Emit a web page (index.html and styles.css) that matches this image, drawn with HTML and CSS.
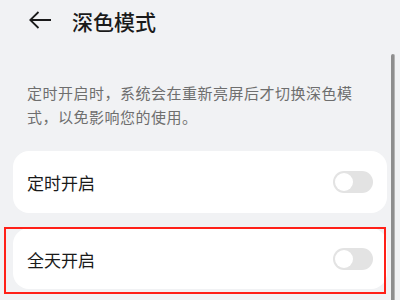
FILE: index.html
```html
<!DOCTYPE html>
<html lang="zh">
<head>
<meta charset="utf-8">
<link rel="stylesheet" href="styles.css">
</head>
<body>
<div class="page">
  <header class="header">
    <svg class="back" width="22" height="18" viewBox="0 0 22 18">
      <path d="M1 9H22M9.5 1L1.2 9L9.5 17" fill="none" stroke="#1a1a1a" stroke-width="1.8" stroke-linecap="butt"/>
    </svg>
    <h1 class="title">深色模式</h1>
  </header>
  <p class="desc">定时开启时，系统会在重新亮屏后才切换深色模式，以免影响您的使用。</p>
  <div class="card">
    <span class="label">定时开启</span>
    <span class="toggle"><span class="knob"></span></span>
  </div>
  <div class="card highlighted">
    <span class="label">全天开启</span>
    <span class="toggle"><span class="knob"></span></span>
  </div>
  <div class="scrollbar"></div>
</div>
</body>
</html>
```
FILE: styles.css
```css
html, body {
  margin: 0;
  padding: 0;
  background: #f1f2f4;
  font-family: "Noto Sans CJK SC", "Noto Sans", sans-serif;
}
.page {
  position: relative;
  width: 400px;
  height: 300px;
  overflow: hidden;
}
.header {
  display: flex;
  align-items: center;
  height: 42px;
  padding-left: 29px;
  gap: 21px;
}
.back {
  display: block;
  margin-top: -2px;
}
.title {
  margin: 0;
  font-size: 21px;
  font-weight: 500;
  color: #1a1a1a;
  line-height: 28px;
}
.desc {
  margin: 39px 0 0 27px;
  width: 335px;
  font-size: 15px;
  line-height: 24px;
  letter-spacing: 0.5px;
  color: #6e6e6e;
}
.card {
  position: relative;
  display: flex;
  align-items: center;
  justify-content: space-between;
  box-sizing: border-box;
  width: 374px;
  height: 62px;
  margin: 22px 0 0 13px;
  padding: 0 14px;
  background: #ffffff;
  border-radius: 16px;
}
.card + .card {
  margin-top: 15px;
  height: 61px;
}
.label {
  font-size: 17px;
  color: #1a1a1a;
  line-height: 24px;
  margin-top: 2px;
}
.toggle {
  position: relative;
  width: 40px;
  height: 22px;
  border-radius: 11px;
  background: #e3e3e3;
}
.knob {
  position: absolute;
  left: 2px;
  top: 2px;
  width: 18px;
  height: 18px;
  border-radius: 50%;
  background: #ffffff;
}
.highlighted::after {
  content: "";
  position: absolute;
  left: -9px;
  top: -1px;
  right: 1px;
  bottom: -5px;
  border: 2px solid #ff2018;
}
.scrollbar {
  position: absolute;
  left: 391px;
  top: 54px;
  width: 3px;
  bottom: 0;
  background: #8e8e8e;
  border-right: 1px solid #b4b4b4;
  border-radius: 2px 2px 0 0;
}
```
